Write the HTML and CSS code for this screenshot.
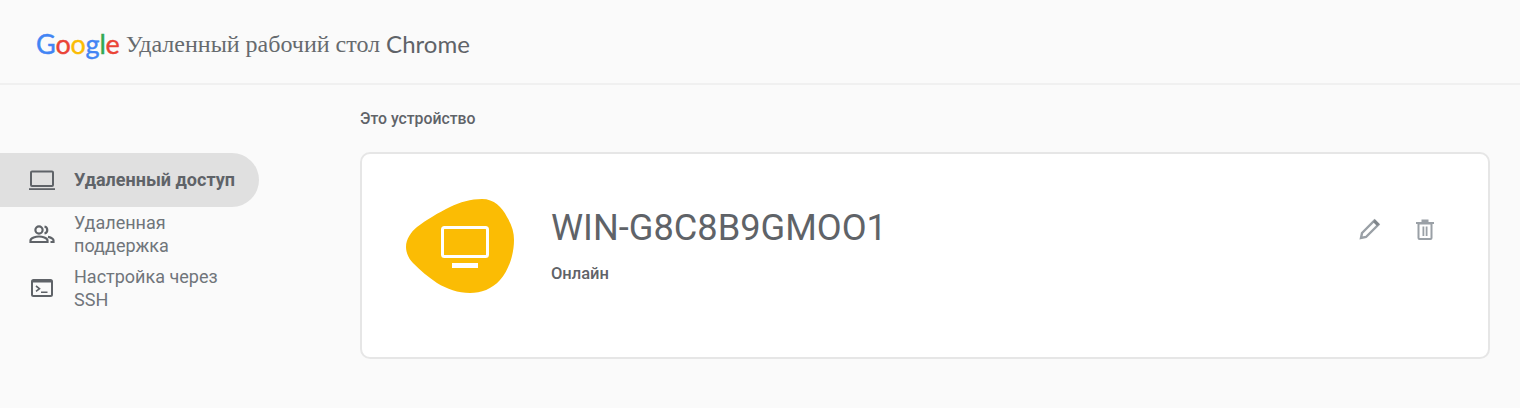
FILE: index.html
```html
<!DOCTYPE html>
<html lang="ru">
  <head>
    <meta charset="UTF-8" />
    <title>Удаленный рабочий стол Chrome</title>
    <link rel="stylesheet" href="styles.css">
  </head>
  <body>
    <header class="topbar">
      <span class="logo"><span class="blue">G</span><span class="red">o</span><span class="yellow">o</span><span class="blue">g</span><span class="green">l</span><span class="red">e</span></span>
      <span class="product">Удаленный рабочий стол</span>
      <span class="chrome">Chrome</span>
    </header>

    <div class="page">
      <nav class="sidebar">
        <a class="nav-item is-active">
          <svg class="nav-icon" viewBox="0 0 28 24"><path d="M4 3.500h20a1 1 0 0 1 1 1V17a1 1 0 0 1-1 1H4a1 1 0 0 1-1-1V4.500a1 1 0 0 1 1-1z" fill="none" stroke="#5f6368" stroke-width="2"/><path d="M1 20.200h26v1.800H1z" fill="#5f6368"/></svg>
          <span>Удаленный доступ</span>
        </a>
        <a class="nav-item">
          <svg class="nav-icon" viewBox="0 0 28 24"><g fill="none" stroke="#5f6368" stroke-width="2.200"><circle cx="11" cy="8" r="3.600"/><path d="M2.500 20v-1.500c0-2.700 5.500-4 8.500-4s8.500 1.300 8.500 4V20z"/><path d="M16.500 4.500a3.600 3.600 0 0 1 0 7"/><path d="M20 14.800c2.800.6 5.500 1.800 5.500 3.700V20h-3"/></g></svg>
          <span>Удаленная поддержка</span>
        </a>
        <a class="nav-item">
          <svg class="nav-icon" viewBox="0 0 28 24"><rect x="4" y="4" width="20" height="16" rx="1.500" fill="none" stroke="#5f6368" stroke-width="2"/><path d="M4 4h20v2.500H4z" fill="#5f6368"/><path d="M8 10l3.500 2.700L8 15.400" fill="none" stroke="#5f6368" stroke-width="1.600"/><path d="M13 15.500h6.500V17H13z" fill="#5f6368"/></svg>
          <span>Настройка через SSH</span>
        </a>
      </nav>

      <main class="content">
        <h2 class="section-title">Это устройство</h2>
        <section class="card">
          <div class="blob">
            <svg class="blob-shape" viewBox="0 0 108 94"><path d="M0 48C0 40 5 33 11 28 20 21 32 14 44 8 54 3 65 0 76 0 88 0 96 8 101 18 106 26 108 33 108 41 108 55 103 71 94 81 86 90 75 94 64 94 52 94 41 90 31 84 22 78 14 71 7 64 3 60 0 54 0 48z" fill="#fbbc04"/></svg>
            <svg class="blob-icon" viewBox="0 0 48 42"><rect x="1.500" y="1.500" width="45" height="29" rx="2" fill="none" stroke="#fff" stroke-width="3"/><path d="M11 37h26v5H11z" fill="#fff"/></svg>
          </div>
          <div class="device">
            <div class="device-name">WIN-G8C8B9GMOO1</div>
            <div class="device-status">Онлайн</div>
          </div>
          <div class="actions">
            <svg class="action" viewBox="0 0 24 24"><path d="M3 21l1-5L16.500 3.500l4 4L8 20z" fill="none" stroke="#9aa0a6" stroke-width="2.400"/><path d="M15 5l2-2.500 4.500 4.500L19 9z" fill="#80868b"/></svg>
            <svg class="action" viewBox="0 0 24 24"><path d="M3 5h18v2H3zM8.500 2.500h7V5h-7z" fill="#9aa0a6"/><path d="M5.500 6.500h13V21a1 1 0 0 1-1 1h-11a1 1 0 0 1-1-1z" fill="none" stroke="#9aa0a6" stroke-width="2"/><path d="M9.500 9.500h1.800V19H9.500zM12.700 9.500h1.800V19h-1.800z" fill="#9aa0a6"/></svg>
          </div>
        </section>
      </main>
    </div>
  </body>
</html>
```

FILE: styles.css
```css
body {
  margin: 0;
  height: 408px;
  overflow: hidden;
  background-color: #fafafa;
  font-family: Roboto, "Liberation Sans", sans-serif;
  color: #5f6368;
}

.topbar {
  height: 85px;
  box-sizing: border-box;
  border-bottom: 2px solid #f0f0f0;
  padding: 6px 0 0 36px;
  display: flex;
  align-items: center;
  gap: 6px;
}
.logo {
  font-family: Lato, sans-serif;
  font-size: 27px;
  letter-spacing: -0.2px;
  margin-top: -2px;
  -webkit-text-stroke: 0.4px;
}
.blue { color: #4285f4; }
.red { color: #ea4335; }
.yellow { color: #fbbc04; }
.green { color: #34a853; }
.product {
  font-family: "Liberation Serif", serif;
  font-size: 24px;
  color: #666a6e;
  margin-top: -1px;
}
.chrome {
  font-family: Lato, sans-serif;
  font-size: 24px;
  color: #5f6368;
  margin-top: -2px;
}

.page {
  display: flex;
}
.sidebar {
  width: 259px;
  flex: none;
  padding-top: 68px;
}
.nav-item {
  display: flex;
  align-items: center;
  gap: 18px;
  padding-left: 28px;
  min-height: 54px;
  font-size: 18px;
  line-height: 23px;
  color: #70757a;
}
.nav-item span {
  width: 170px;
}
.nav-item.is-active {
  background-color: #e0e0e0;
  border-radius: 0 27px 27px 0;
  font-weight: 700;
  color: #5f6368;
}
.nav-item.is-active span {
  width: auto;
  white-space: nowrap;
  padding-bottom: 2px;
}
.nav-icon {
  width: 28px;
  height: 24px;
  flex: none;
}

.content {
  margin-left: 101px;
  width: 1130px;
}
.section-title {
  margin: 25px 0 0;
  font-size: 15.800px;
  line-height: 17px;
  font-weight: 500;
  color: #5f6368;
}
.card {
  margin-top: 25px;
  height: 207px;
  box-sizing: border-box;
  background-color: #fff;
  border: 2px solid #e6e6e6;
  border-radius: 10px;
  display: flex;
  align-items: flex-start;
  padding: 45px 51px 0 44px;
}
.blob {
  width: 108px;
  height: 94px;
  flex: none;
  display: grid;
}
.blob-shape,
.blob-icon {
  grid-area: 1 / 1;
}
.blob-shape {
  width: 108px;
  height: 94px;
  display: block;
}
.blob-icon {
  width: 48px;
  height: 42px;
  margin: 27px 0 0 35px;
}
.device {
  margin-left: 37px;
  flex: 1;
}
.device-name {
  font-size: 36.200px;
  line-height: 40px;
  margin-top: 9px;
  color: #5f6368;
}
.device-status {
  margin-top: 17px;
  font-size: 16.500px;
  line-height: 18px;
  font-weight: 500;
  color: #5f6368;
}
.actions {
  display: flex;
  gap: 31px;
  margin-top: 18px;
}
.action {
  width: 24px;
  height: 24px;
}
```
